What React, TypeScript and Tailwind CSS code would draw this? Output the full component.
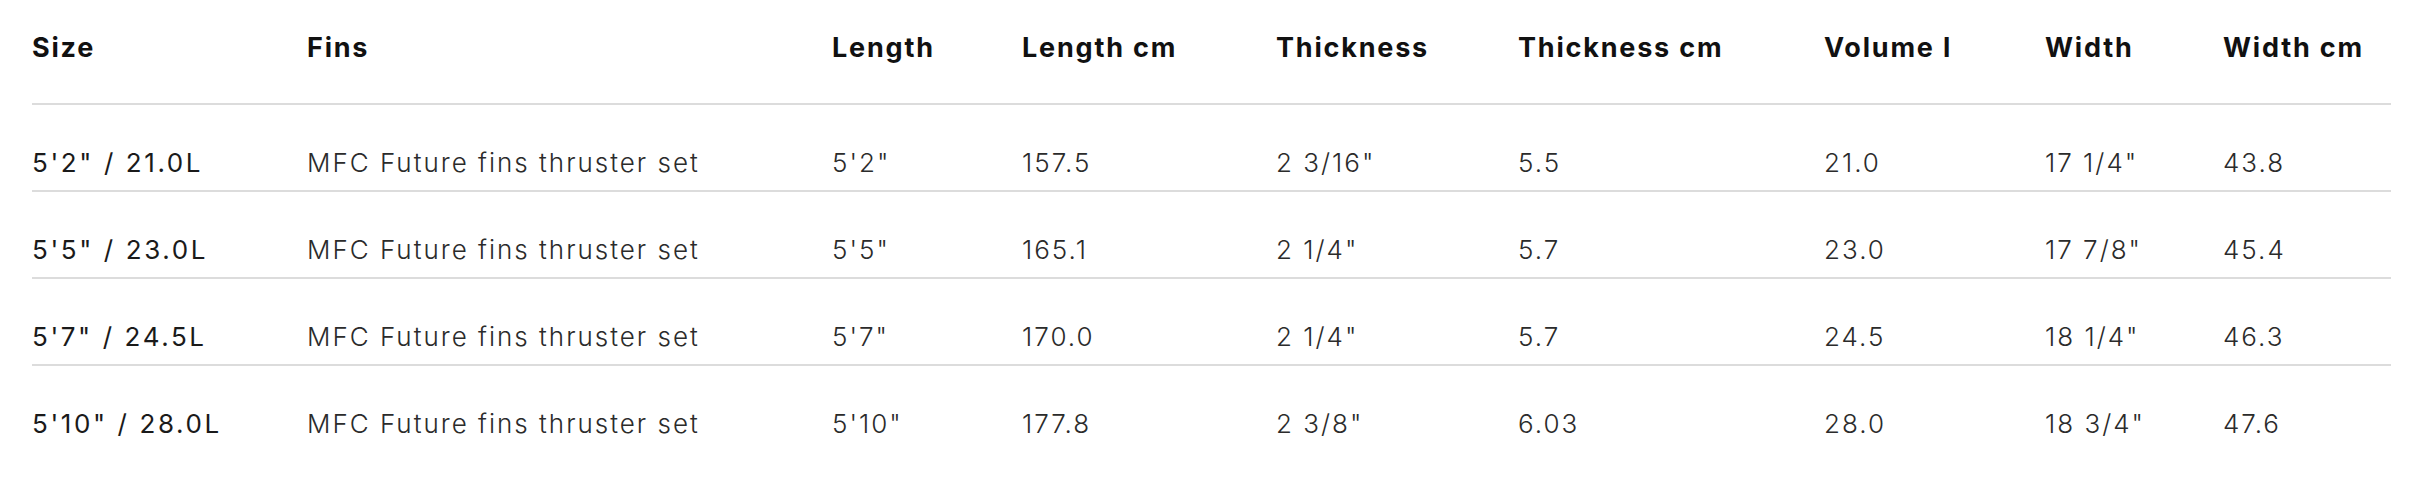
const headers = [
  'Size',
  'Fins',
  'Length',
  'Length cm',
  'Thickness',
  'Thickness cm',
  'Volume l',
  'Width',
  'Width cm'
]

const rows = [
  ['5\'2" / 21.0L', 'MFC Future fins thruster set', '5\'2"', '157.5', '2 3/16"', '5.5', '21.0', '17 1/4"', '43.8'],
  ['5\'5" / 23.0L', 'MFC Future fins thruster set', '5\'5"', '165.1', '2 1/4"', '5.7', '23.0', '17 7/8"', '45.4'],
  ['5\'7" / 24.5L', 'MFC Future fins thruster set', '5\'7"', '170.0', '2 1/4"', '5.7', '24.5', '18 1/4"', '46.3'],
  ['5\'10" / 28.0L', 'MFC Future fins thruster set', '5\'10"', '177.8', '2 3/8"', '6.03', '28.0', '18 3/4"', '47.6']
]

const cols = 'grid grid-cols-[275px_525px_190px_254px_242px_306px_221px_178px_168px]'

export default function App() {
  return (
    <div className="h-[482px] w-full bg-white font-['Inter',sans-serif]">
      <div className="ml-[32px] w-[2359px]">
        <div className={`${cols} h-[105px] border-b-2 border-[#dcdcdc] pt-[34px]`}>
          {headers.map((h) => (
            <div key={h} className="whitespace-nowrap text-[27px] leading-[27px] font-bold tracking-[1.8px] text-[#111111]">
              {h}
            </div>
          ))}
        </div>
        {rows.map((r, i) => (
          <div
            key={r[0]}
            className={`${cols} h-[87px] pt-[45px] ${i < rows.length - 1 ? 'border-b-2 border-[#dcdcdc]' : ''}`}
          >
            {r.map((c, j) => (
              <div
                key={j}
                className={
                  j === 0
                    ? 'whitespace-nowrap text-[26px] leading-[26px] font-normal tracking-[2.6px] text-[#1a1a1a]'
                    : 'whitespace-nowrap text-[26px] leading-[26px] font-light tracking-[2px] text-[#2b2b2b]'
                }
              >
                {c}
              </div>
            ))}
          </div>
        ))}
      </div>
    </div>
  )
}
